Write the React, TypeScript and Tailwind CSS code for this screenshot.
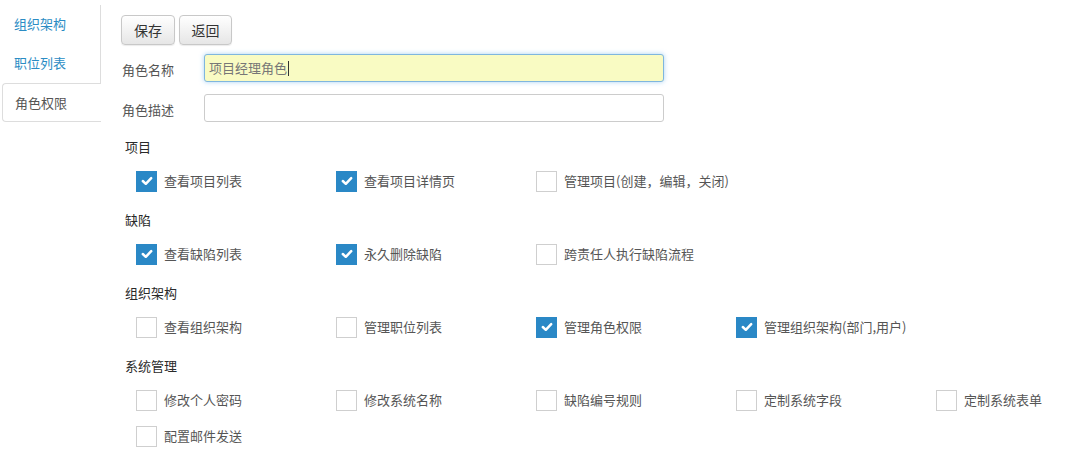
import React from "react";

const font = { fontFamily: '"Microsoft YaHei", "Noto Sans CJK SC", "Noto Sans", sans-serif' };

type Item = { label: string; checked: boolean };
const sections: { title: string; items: Item[] }[] = [
  {
    title: "项目",
    items: [
      { label: "查看项目列表", checked: true },
      { label: "查看项目详情页", checked: true },
      { label: "管理项目(创建，编辑，关闭)", checked: false },
    ],
  },
  {
    title: "缺陷",
    items: [
      { label: "查看缺陷列表", checked: true },
      { label: "永久删除缺陷", checked: true },
      { label: "跨责任人执行缺陷流程", checked: false },
    ],
  },
  {
    title: "组织架构",
    items: [
      { label: "查看组织架构", checked: false },
      { label: "管理职位列表", checked: false },
      { label: "管理角色权限", checked: true },
      { label: "管理组织架构(部门,用户)", checked: true },
    ],
  },
  {
    title: "系统管理",
    items: [
      { label: "修改个人密码", checked: false },
      { label: "修改系统名称", checked: false },
      { label: "缺陷编号规则", checked: false },
      { label: "定制系统字段", checked: false },
      { label: "定制系统表单", checked: false },
      { label: "配置邮件发送", checked: false },
    ],
  },
];

function Box({ checked }: { checked: boolean }) {
  if (checked) {
    return (
      <span className="flex h-[21px] w-[21px] shrink-0 items-center justify-center bg-[#2a88c6]">
        <svg width="12" height="10" viewBox="0 0 12 10" fill="none">
          <path d="M1.8 5 L4.8 7.8 L10.2 2.2" stroke="#fff" strokeWidth="2.5" strokeLinecap="round" strokeLinejoin="round" />
        </svg>
      </span>
    );
  }
  return <span className="h-[21px] w-[21px] shrink-0 border border-[#cfcfcf] bg-white" />;
}

export default function App() {
  return (
    <div className="flex min-h-[464px] w-[1081px] overflow-hidden bg-white text-[13px] text-[#555]" style={font}>
      {/* sidebar */}
      <div className="flex w-[101px] shrink-0 flex-col pt-[1px]">
        <div className="mt-[4px] border-r border-[#ddd]">
          <div className="flex h-[37px] items-center pl-[14px] text-[#2b8cc4]">组织架构</div>
          <div className="flex h-[41px] items-center pl-[14px] text-[#2b8cc4]">职位列表</div>
        </div>
        <div className="ml-[2px] flex h-[39px] items-center rounded-l-[4px] border border-r-0 border-[#ddd] pl-[12px] text-[#555]">
          角色权限
        </div>
      </div>

      {/* main */}
      <div className="flex flex-1 flex-col pl-[20px] pt-[15px]">
        <div className="flex gap-[4px]">
          <button className="h-[30px] w-[54px] rounded-[4px] border border-[#c8c8c8] bg-gradient-to-b from-white to-[#e6e6e6] text-[14px] text-[#333] shadow-[0_1px_1px_rgba(0,0,0,0.08)]">
            保存
          </button>
          <button className="h-[30px] w-[53px] rounded-[4px] border border-[#c8c8c8] bg-gradient-to-b from-white to-[#e6e6e6] text-[14px] text-[#333] shadow-[0_1px_1px_rgba(0,0,0,0.08)]">
            返回
          </button>
        </div>

        <div className="mt-[9px] flex items-center">
          <div className="w-[83px] pl-[1px] pt-[4px]">角色名称</div>
          <div className="flex h-[28px] w-[460px] items-center rounded-[3px] border border-[#7fb6de] bg-[#f9fbc3] pl-[4px] text-[#777] shadow-[0_0_5px_rgba(102,175,233,0.55)]">
            项目经理角色
            <span className="ml-[1px] inline-block h-[15px] w-[1px] bg-[#333]" />
          </div>
        </div>

        <div className="mt-[12px] flex items-center">
          <div className="w-[83px] pl-[1px] pt-[4px]">角色描述</div>
          <div className="h-[28px] w-[460px] rounded-[3px] border border-[#ccc] bg-white" />
        </div>

        <div className="mt-[15px] flex flex-col">
          {sections.map((s) => (
            <div key={s.title} className="flex flex-col pb-[11px]">
              <div className="flex h-[20px] items-center pl-[4px] text-[#2a2a2a]">{s.title}</div>
              <div className="mt-[6px] grid grid-cols-[200px_200px_200px_200px_auto] pl-[15px]">
                {s.items.map((it) => (
                  <div key={it.label} className="flex h-[36px] items-center gap-[7px]">
                    <Box checked={it.checked} />
                    <span>{it.label}</span>
                  </div>
                ))}
              </div>
            </div>
          ))}
        </div>
      </div>
    </div>
  );
}
